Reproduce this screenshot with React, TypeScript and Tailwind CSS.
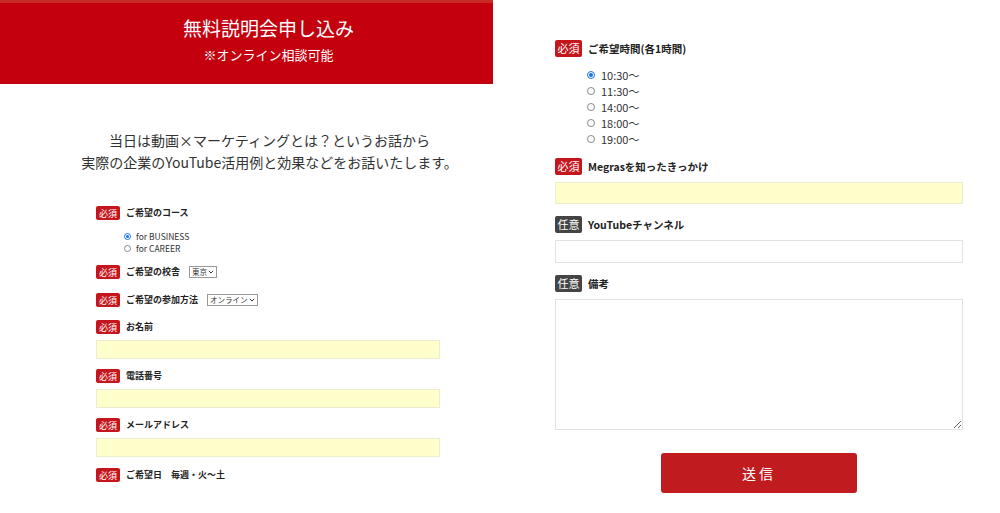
import React from 'react';

const font = { fontFamily: '"Noto Sans CJK JP", "Noto Sans", sans-serif' };

const Badge: React.FC<{ optional?: boolean; big?: boolean }> = ({ optional, big }) => (
  <span
    className={`inline-flex items-center justify-center rounded-[2px] text-white leading-none shrink-0 ${
      optional ? 'bg-[#444444]' : 'bg-[#c4161c]'
    } ${big ? 'w-[27px] h-[17px] text-[11px]' : 'w-[24px] h-[14px] text-[9px]'}`}
  >
    {optional ? '任意' : '必須'}
  </span>
);

const Label: React.FC<{ text: string; optional?: boolean; big?: boolean; className?: string; children?: React.ReactNode }> = ({
  text,
  optional,
  big,
  className = '',
  children,
}) => (
  <div className={`flex items-center ${big ? 'gap-[6px] h-[17px]' : 'gap-[6px] h-[14px]'} ${className}`}>
    <Badge optional={optional} big={big} />
    <span className={`font-bold text-[#222] whitespace-nowrap ${big ? 'text-[10.5px]' : 'text-[9px]'}`}>{text}</span>
    {children}
  </div>
);

const Radio: React.FC<{ checked?: boolean; big?: boolean }> = ({ checked, big }) => (
  <span
    className={`inline-flex items-center justify-center rounded-full border bg-white shrink-0 ${
      big ? 'w-[8px] h-[8px]' : 'w-[7px] h-[7px]'
    } ${checked ? 'border-[#1a73e8]' : 'border-[#888]'}`}
  >
    {checked && <span className={`rounded-full bg-[#1a73e8] ${big ? 'w-[4px] h-[4px]' : 'w-[3px] h-[3px]'}`} />}
  </span>
);

const Select: React.FC<{ text: string; w: string }> = ({ text, w }) => (
  <span
    className={`inline-flex items-center justify-between border border-[#999] bg-white h-[12px] px-[2px] text-[7.5px] text-[#333] leading-none whitespace-nowrap overflow-hidden ${w}`}
  >
    <span>{text}</span>
    <svg width="6" height="4" viewBox="0 0 6 4" className="shrink-0">
      <path d="M0.8 0.8 L3 3 L5.2 0.8" stroke="#333" strokeWidth="1" fill="none" />
    </svg>
  </span>
);

export default function App() {
  const times = ['10:30～', '11:30～', '14:00～', '18:00～', '19:00～'];
  return (
    <div className="w-[1000px] h-[513px] bg-white flex overflow-hidden" style={font}>
      {/* Left column */}
      <div className="w-[493px] flex flex-col">
        <div className="h-[84px] bg-[#c4000e] border-t-[3px] border-[#c62b25] flex flex-col items-center text-white">
          <div className="text-[19px] leading-[24px] mt-[13px] pl-[44px]">無料説明会申し込み</div>
          <div className="text-[13px] leading-[17px] mt-[6px] pl-[44px]">※オンライン相談可能</div>
        </div>

        <div className="mt-[45px] text-center text-[14px] leading-[22px] text-[#333] pl-[46px]">
          <div>当日は動画×マーケティングとは？というお話から</div>
          <div>実際の企業のYouTube活用例と効果などをお話いたします。</div>
        </div>

        <div className="pl-[96px] pr-[53px] flex flex-col">
          <Label text="ご希望のコース" className="mt-[33px]" />
          <div className="mt-[10px] pl-[28px] flex flex-col text-[8.5px] text-[#333]">
            <div className="flex items-center gap-[5px] h-[12px]">
              <Radio checked />
              <span>for BUSINESS</span>
            </div>
            <div className="flex items-center gap-[5px] h-[12px]">
              <Radio />
              <span>for CAREER</span>
            </div>
          </div>
          <Label text="ご希望の校舎" className="mt-[11px]">
            <span className="ml-[3px] flex">
              <Select text="東京" w="w-[28px]" />
            </span>
          </Label>
          <Label text="ご希望の参加方法" className="mt-[14px]">
            <span className="ml-[3px] flex">
              <Select text="オンライン" w="w-[51px]" />
            </span>
          </Label>
          <Label text="お名前" className="mt-[13px]" />
          <div className="mt-[6px] h-[19px] bg-[#ffffcc] border border-[#ececd0]" />
          <Label text="電話番号" className="mt-[10px]" />
          <div className="mt-[6px] h-[19px] bg-[#ffffcc] border border-[#ececd0]" />
          <Label text="メールアドレス" className="mt-[10px]" />
          <div className="mt-[6px] h-[19px] bg-[#ffffcc] border border-[#ececd0]" />
          <Label text="ご希望日　毎週・火～土" className="mt-[11px]" />
        </div>
      </div>

      {/* Right column */}
      <div className="ml-[62px] w-[408px] pt-[40px] flex flex-col">
        <Label text="ご希望時間(各1時間)" big />
        <div className="mt-[10px] pl-[32px] flex flex-col text-[11px] text-[#333]">
          {times.map((t, i) => (
            <div key={t} className="flex items-center gap-[6px] h-[16px]">
              <Radio checked={i === 0} big />
              <span>{t}</span>
            </div>
          ))}
        </div>
        <Label text="Megrasを知ったきっかけ" big className="mt-[11px]" />
        <div className="mt-[7px] h-[22px] bg-[#ffffcc] border border-[#ececd0]" />
        <Label text="YouTubeチャンネル" optional big className="mt-[12px]" />
        <div className="mt-[7px] h-[23px] bg-white border border-[#e2e2e2]" />
        <Label text="備考" optional big className="mt-[12px]" />
        <textarea className="mt-[7px] h-[131px] bg-white border border-[#e2e2e2] resize-y outline-none" />
        <div className="flex justify-center mt-[23px]">
          <button className="w-[196px] h-[40px] bg-[#c01b1f] rounded-[3px] text-white text-[14px] tracking-[3px]">
            送信
          </button>
        </div>
      </div>
    </div>
  );
}
